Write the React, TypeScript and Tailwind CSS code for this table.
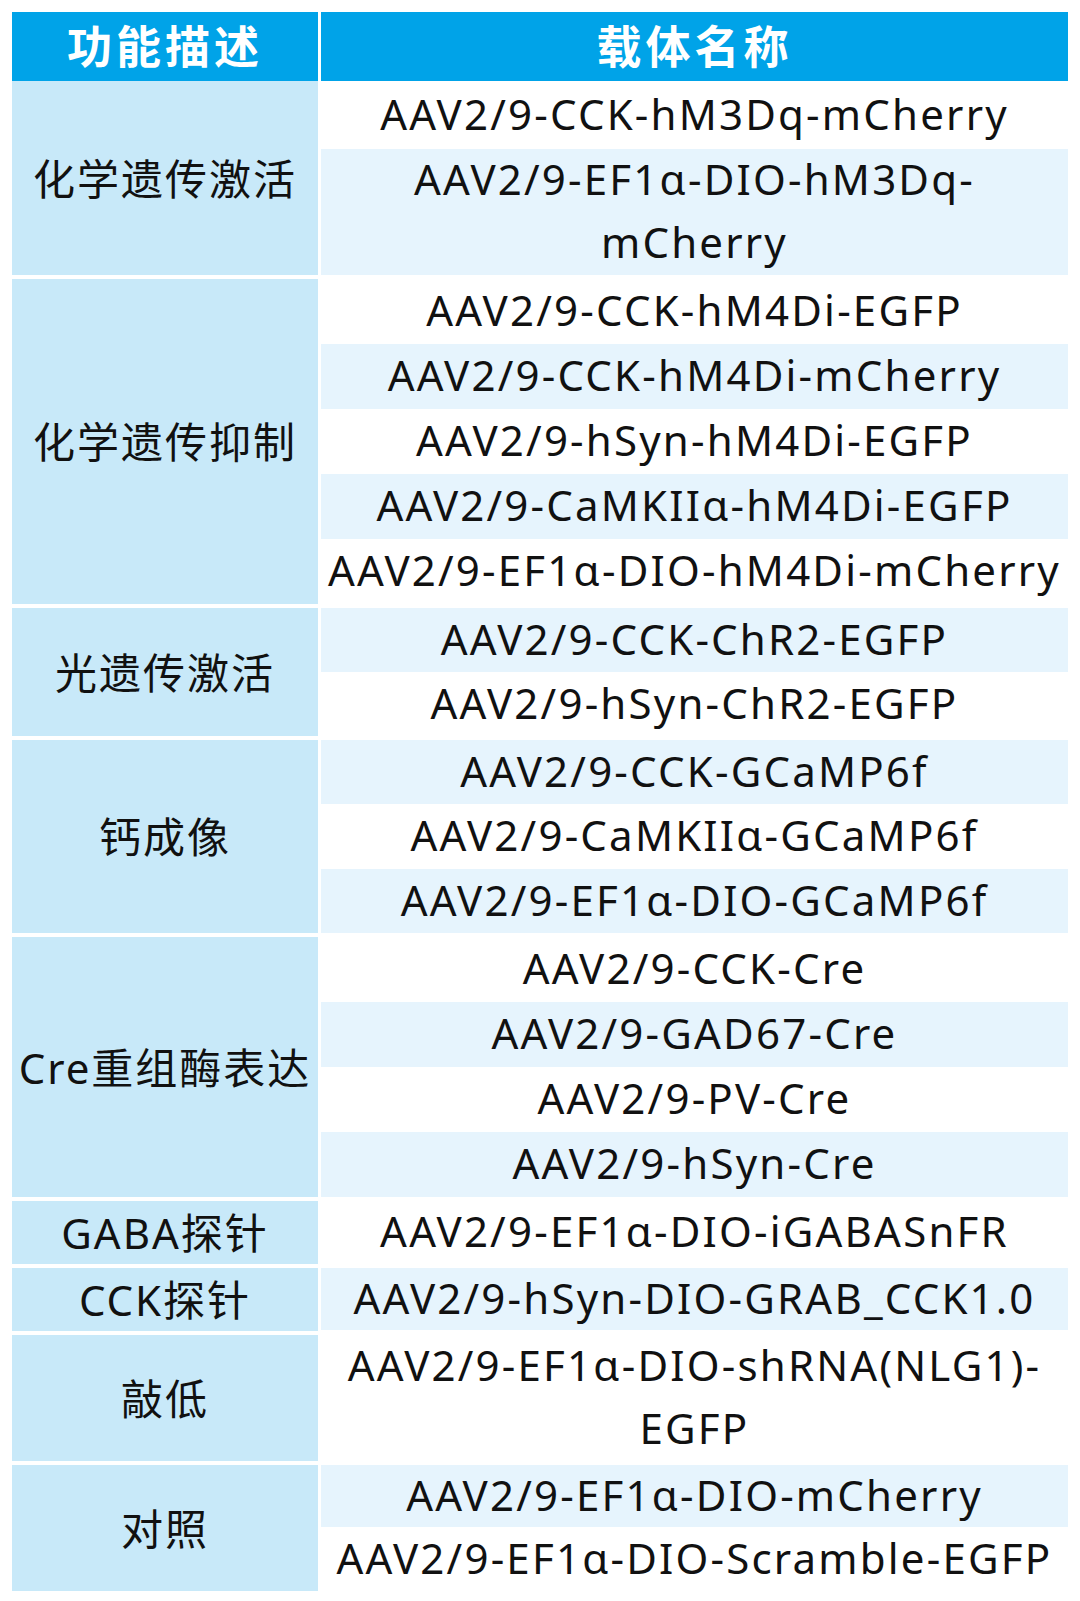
import React from "react";

type Row = { lines: string[]; h: string };
type Group = { label: string; rows: Row[] };

const groups: Group[] = [
  {
    label: "化学遗传激活",
    rows: [
      { lines: ["AAV2/9-CCK-hM3Dq-mCherry"], h: "h-[68px]" },
      { lines: ["AAV2/9-EF1α-DIO-hM3Dq-", "mCherry"], h: "h-[126px]" },
    ],
  },
  {
    label: "化学遗传抑制",
    rows: [
      { lines: ["AAV2/9-CCK-hM4Di-EGFP"], h: "h-[65px]" },
      { lines: ["AAV2/9-CCK-hM4Di-mCherry"], h: "h-[65px]" },
      { lines: ["AAV2/9-hSyn-hM4Di-EGFP"], h: "h-[65px]" },
      { lines: ["AAV2/9-CaMKIIα-hM4Di-EGFP"], h: "h-[65px]" },
      { lines: ["AAV2/9-EF1α-DIO-hM4Di-mCherry"], h: "h-[65px]" },
    ],
  },
  {
    label: "光遗传激活",
    rows: [
      { lines: ["AAV2/9-CCK-ChR2-EGFP"], h: "h-[64px]" },
      { lines: ["AAV2/9-hSyn-ChR2-EGFP"], h: "h-[64px]" },
    ],
  },
  {
    label: "钙成像",
    rows: [
      { lines: ["AAV2/9-CCK-GCaMP6f"], h: "h-[64px]" },
      { lines: ["AAV2/9-CaMKIIα-GCaMP6f"], h: "h-[65px]" },
      { lines: ["AAV2/9-EF1α-DIO-GCaMP6f"], h: "h-[64px]" },
    ],
  },
  {
    label: "Cre重组酶表达",
    rows: [
      { lines: ["AAV2/9-CCK-Cre"], h: "h-[65px]" },
      { lines: ["AAV2/9-GAD67-Cre"], h: "h-[65px]" },
      { lines: ["AAV2/9-PV-Cre"], h: "h-[65px]" },
      { lines: ["AAV2/9-hSyn-Cre"], h: "h-[65px]" },
    ],
  },
  {
    label: "GABA探针",
    rows: [{ lines: ["AAV2/9-EF1α-DIO-iGABASnFR"], h: "h-[62px]" }],
  },
  {
    label: "CCK探针",
    rows: [{ lines: ["AAV2/9-hSyn-DIO-GRAB_CCK1.0"], h: "h-[62px]" }],
  },
  {
    label: "敲低",
    rows: [{ lines: ["AAV2/9-EF1α-DIO-shRNA(NLG1)-", "EGFP"], h: "h-[126px]" }],
  },
  {
    label: "对照",
    rows: [
      { lines: ["AAV2/9-EF1α-DIO-mCherry"], h: "h-[62px]" },
      { lines: ["AAV2/9-EF1α-DIO-Scramble-EGFP"], h: "h-[64px]" },
    ],
  },
];

const font = { fontFamily: '"Noto Sans", "Noto Sans CJK SC", sans-serif' };

export default function App() {
  let idx = 0;
  return (
    <div className="w-[1080px] h-[1601px] bg-white px-[12px] pt-[12px]" style={font}>
      <div className="flex flex-col w-[1056px]">
        <div className="flex gap-[3px] h-[69px]">
          <div className="w-[306px] bg-[#00a3e8] flex items-center justify-center text-white font-bold text-[45px] tracking-[4px]">
            功能描述
          </div>
          <div className="flex-1 bg-[#00a3e8] flex items-center justify-center text-white font-bold text-[45px] tracking-[4px]">
            载体名称
          </div>
        </div>
        <div className="flex flex-col gap-[4px]">
          {groups.map((g, gi) => (
            <div key={gi} className="flex gap-[3px]">
              <div className="w-[306px] shrink-0 bg-[#c8e9f9] flex items-center justify-center text-[42px] text-[#111] tracking-[2px] whitespace-nowrap">
                {g.label}
              </div>
              <div className="flex-1 flex flex-col">
                {g.rows.map((r, ri) => {
                  const light = idx % 2 === 1;
                  idx++;
                  return (
                    <div
                      key={ri}
                      className={`${r.h} ${light ? "bg-[#e6f4fd]" : "bg-white"} flex flex-col items-center justify-center pb-[4px] text-[42px] leading-[63px] text-[#111] tracking-[2.2px] whitespace-nowrap`}
                    >
                      {r.lines.map((l, li) => (
                        <span key={li}>{l}</span>
                      ))}
                    </div>
                  );
                })}
              </div>
            </div>
          ))}
        </div>
      </div>
    </div>
  );
}
